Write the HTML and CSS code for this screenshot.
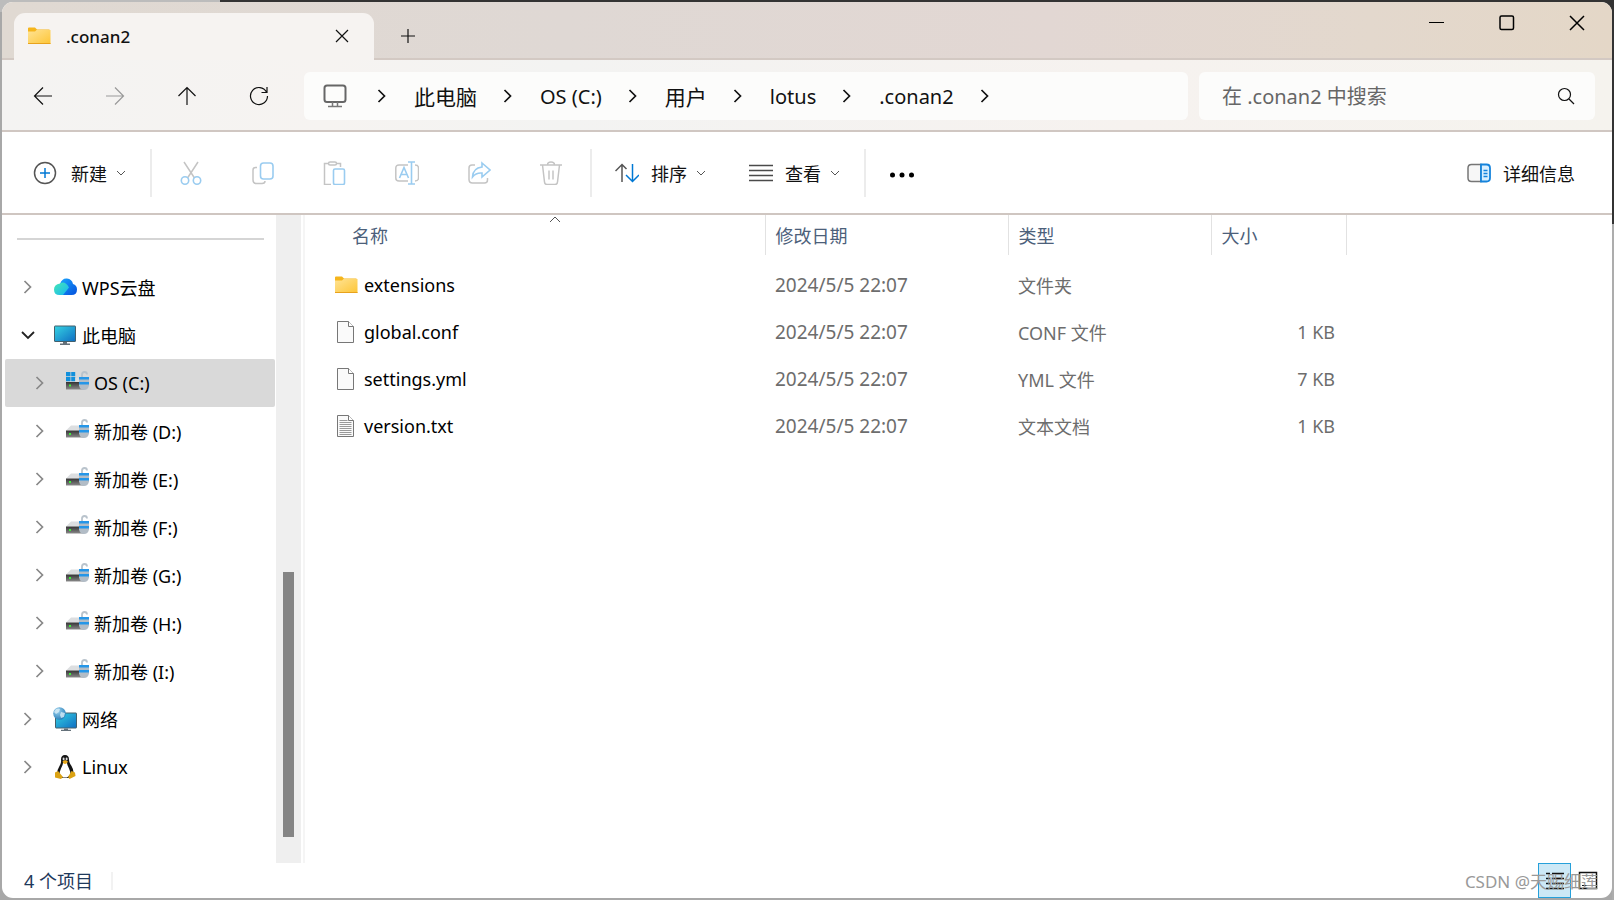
FILE: index.html
```html
<!DOCTYPE html>
<html lang="zh-CN">
<head>
<meta charset="utf-8">
<title>.conan2</title>
<link rel="stylesheet" href="styles.css">
</head>
<body>
<svg class="defs" aria-hidden="true">
  <defs>
    <linearGradient id="gFolder" x1="0" y1="0" x2="1" y2="1"><stop offset="0" stop-color="#ffe394"/><stop offset="1" stop-color="#fdc536"/></linearGradient>
    <linearGradient id="gScreen" x1="0" y1="0" x2="1" y2="1"><stop offset="0" stop-color="#35d3e3"/><stop offset="1" stop-color="#0f6dc2"/></linearGradient>
    <linearGradient id="gCloudL" x1="0" y1="0" x2="1" y2="1"><stop offset="0" stop-color="#45e8b4"/><stop offset="1" stop-color="#16b4f6"/></linearGradient>
    <linearGradient id="gCloudR" x1="0" y1="0" x2="1" y2="1"><stop offset="0" stop-color="#1aa5ff"/><stop offset="1" stop-color="#0550dc"/></linearGradient>
    <linearGradient id="gDrive" x1="0" y1="0" x2="0" y2="1"><stop offset="0" stop-color="#333"/><stop offset="1" stop-color="#8a8a8a"/></linearGradient>
    <radialGradient id="gGlobe" cx=".35" cy=".3" r=".8"><stop offset="0" stop-color="#9ed3ee"/><stop offset="1" stop-color="#1d77b5"/></radialGradient>
    <symbol id="folder" viewBox="0 0 24 24"><path d="M1 4.500q0-1 1-1h6l2 2h12.500v4H1z" fill="#f5b51c"/><path d="M1 7.500h7l1.500-1.500H23.500v14H1z" fill="url(#gFolder)"/><path d="M1 19.500h22.500" stroke="#e8a21c" stroke-width="1"/></symbol>
    <symbol id="right" viewBox="0 0 12 16"><path d="M2.500 2l6 6-6 6" fill="none" stroke="currentColor" stroke-width="1.700"/></symbol>
    <symbol id="down" viewBox="0 0 10 8"><path d="M1 2l4 4 4-4" fill="none" stroke="currentColor" stroke-width="1"/></symbol>
    <symbol id="file" viewBox="0 0 24 24"><path d="M3.500 1.500h11l5 5v16h-16z" fill="#fafafa" stroke="#777"/><path d="M14.500 1.500v5h5" fill="#fff" stroke="#777"/></symbol>
    <symbol id="lock" viewBox="0 0 24 24"><path d="M17 8V3.500q0-2.500 2.500-2.500T22 3.500" fill="none" stroke="#b9c3cc" stroke-width="1.800"/><path d="M14 6h10v8.500q-1 4.500-5 4.500t-5-4.500z" fill="#b2bcc6"/><path d="M14 6h10v2.500H14zM14 11h10v2.500H14z" fill="#2596e8"/></symbol>
    <symbol id="drive" viewBox="0 0 24 24"><path d="M1 11.500l5-5h9v5z" fill="#dcdee0"/><path d="M1 11.500h18v7H1z" fill="url(#gDrive)"/><path d="M4 14h2v2H4z" fill="#3ef03a"/><use href="#lock"/></symbol>
    <symbol id="osdrive" viewBox="0 0 24 24"><path d="M1 1h4.500v4.200H1zM6.200 1h4v4.200h-4zM1 6h4.500v4.200H1zM6.200 6h4v4.200h-4z" fill="#1290dc"/><path d="M10.500 7H15v4h-4.500z" fill="#dcdee0"/><path d="M1 11h18v7.500H1z" fill="url(#gDrive)"/><path d="M4 13.500h2v2H4z" fill="#3ef03a"/><use href="#lock"/></symbol>
  </defs>
</svg>

<div class="window">
  <header class="titlebar">
    <div class="tab">
      <svg class="i24"><use href="#folder"/></svg>
      <span class="tab-name">.conan2</span>
      <button class="tab-close" aria-label="关闭标签页"><svg class="i16" viewBox="0 0 16 16"><path d="M2 2l12 12M14 2L2 14" class="ln"/></svg></button>
    </div>
    <button class="tab-new" aria-label="新标签页"><svg class="i16" viewBox="0 0 16 16"><path d="M8 1v14M1 8h14" class="ln"/></svg></button>
    <div class="win-controls">
      <button aria-label="最小化"><svg class="i16" viewBox="0 0 16 16"><path d="M0 7.500h15" class="ln2 thin"/></svg></button>
      <button aria-label="最大化"><svg class="i16" viewBox="0 0 16 16"><rect x="1" y="1" width="13.500" height="13.500" rx="1.500" class="ln2"/></svg></button>
      <button aria-label="关闭"><svg class="i16" viewBox="0 0 16 16"><path d="M1 1l14 14M15 1L1 15" class="ln2"/></svg></button>
    </div>
  </header>

  <nav class="navbar">
    <div class="nav-buttons">
      <button aria-label="后退"><svg class="i20" viewBox="0 0 20 20"><path d="M19 10H1.500M10 1.500L1.500 10l8.500 8.500" class="ln"/></svg></button>
      <button aria-label="前进" class="off"><svg class="i20" viewBox="0 0 20 20"><path d="M1 10h17.500M10 1.500l8.500 8.500-8.500 8.500" class="ln"/></svg></button>
      <button aria-label="向上"><svg class="i20" viewBox="0 0 20 20"><path d="M10 19V1.500M1.500 10L10 1.500l8.500 8.500" class="ln"/></svg></button>
      <button aria-label="刷新"><svg class="i20" viewBox="0 0 20 20"><path d="M17.500 6A8.500 8.500 0 1 0 18.500 10M18 1v5.500h-5.500" class="ln"/></svg></button>
    </div>
    <div class="address">
      <svg class="i24 pc" viewBox="0 0 24 24"><rect x="1.500" y="1.500" width="21" height="16.500" rx="2.500" fill="none" stroke="#666" stroke-width="2"/><path d="M9.500 18v4M14.500 18v4M5 22.500h14" fill="none" stroke="#777" stroke-width="1.500"/></svg>
      <svg class="sep"><use href="#right"/></svg><button class="cjk">此电脑</button>
      <svg class="sep"><use href="#right"/></svg><button>OS (C:)</button>
      <svg class="sep"><use href="#right"/></svg><button class="cjk">用户</button>
      <svg class="sep"><use href="#right"/></svg><button>lotus</button>
      <svg class="sep"><use href="#right"/></svg><button>.conan2</button>
      <svg class="sep"><use href="#right"/></svg>
    </div>
    <div class="search">
      <input type="text" aria-label="搜索" placeholder="在 .conan2 中搜索">
      <svg class="i18" viewBox="0 0 18 18"><circle cx="7.500" cy="7.500" r="6" class="ln"/><path d="M12 12l5 5" class="ln"/></svg>
    </div>
  </nav>

  <div class="toolbar">
    <button class="tool new"><svg class="i24" viewBox="0 0 24 24"><circle cx="12" cy="12" r="10.500" fill="none" stroke="#555" stroke-width="1.500"/><path d="M12 7v10M7 12h10" stroke="#0078d4" stroke-width="1.500"/></svg><span>新建</span><svg class="drop"><use href="#down"/></svg></button>
    <span class="rule"></span>
    <div class="actions">
      <button aria-label="剪切"><svg class="i24" viewBox="0 0 24 24"><path d="M5 1l10.500 16M19 1L8.500 17" class="g"/><circle cx="6" cy="19.500" r="3.700" class="b"/><circle cx="18" cy="19.500" r="3.700" class="b"/></svg></button>
      <button aria-label="复制"><svg class="i24" viewBox="0 0 24 24"><path d="M6 6.500H4.500Q2 6.500 2 9v10q0 3.500 3.500 3.500H11q3 0 3-2.500" class="g"/><rect x="9.500" y="2" width="12.500" height="16" rx="3" class="b"/></svg></button>
      <button aria-label="粘贴"><svg class="i24" viewBox="0 0 24 24"><path d="M6 2.500H1.500v21H8M13 2.500h4.500V6" class="g"/><rect x="5.500" y="1" width="8" height="3" rx="1.500" class="g"/><rect x="10.500" y="8" width="11" height="15.500" rx="1.500" class="b"/></svg></button>
      <button aria-label="重命名"><svg class="i24" viewBox="0 0 24 24"><path d="M13 4H4Q.8 4 .8 7v10q0 3 3.200 3H13M20 4q3.500 0 3.500 3v10q0 3-3.500 3" class="g"/><path d="M4.500 17L9 6.500 13.500 17M6 13.500h6M16.500 1v22M13 1h7M13 23h7" class="b"/></svg></button>
      <button aria-label="共享"><svg class="i24" viewBox="0 0 24 24"><path d="M8 4H5Q2 4 2 7v11.500q0 3.500 3.500 3.500h12q3 0 3-3V17" class="g"/><path d="M15 2l8 7-8 7v-4q-6-.5-9.500 4Q6 7 15 6z" class="b"/></svg></button>
      <button aria-label="删除"><svg class="i24" viewBox="0 0 24 24"><path d="M1 4h22M8.500 4q0-3 3.500-3t3.500 3M3.500 4l2 17q.2 2.500 2.500 2.500h8q2.300 0 2.500-2.500l2-17M10 9.500v9M14 9.500v9" class="g"/></svg></button>
    </div>
    <span class="rule"></span>
    <button class="tool sort"><svg class="i24" viewBox="0 0 24 24"><path d="M7 21V3.500M.500 10L7 3.500l4.500 4.500" fill="none" stroke="#555" stroke-width="1.500"/><path d="M17.500 3v17.500M11 14l6.500 6.500L24 14" fill="none" stroke="#0078d4" stroke-width="1.500"/></svg><span>排序</span><svg class="drop"><use href="#down"/></svg></button>
    <button class="tool view"><svg class="i24" viewBox="0 0 24 24"><path d="M0 4.500h24M0 9.500h24M0 14.500h24M0 19.500h24" stroke="#4a4a4a" stroke-width="1.500"/></svg><span>查看</span><svg class="drop"><use href="#down"/></svg></button>
    <span class="rule"></span>
    <button class="tool more" aria-label="更多"><svg class="i24" viewBox="0 0 24 24"><circle cx="2.500" cy="14" r="2.500"/><circle cx="12" cy="14" r="2.500"/><circle cx="21.500" cy="14" r="2.500"/></svg></button>
    <button class="tool details"><svg class="i24" viewBox="0 0 24 24"><path d="M14 3.500H4.500Q1 3.500 1 7v10q0 3.500 3.500 3.500H14z" fill="#f7f7f7" stroke="#767676" stroke-width="1.500"/><path d="M14 3.500h5.500Q23 3.500 23 7v10q0 3.500-3.500 3.500H14z" fill="#d9efff" stroke="#1583dc" stroke-width="1.800"/><path d="M16.500 9.500h4M16.500 12.500h4M16.500 15.500h4" stroke="#1583dc" stroke-width="1.500"/></svg><span>详细信息</span></button>
  </div>

  <main class="content">
    <aside class="sidebar">
      <hr>
      <ul class="tree">
        <li><button><svg class="arrow"><use href="#right"/></svg><svg class="i24" viewBox="0 0 24 24"><path d="M7 9Q9 3 14 3.500 19 4 20 9q4 1 4 5.500 0 5.500-5.500 5.500H10z" fill="url(#gCloudR)"/><path d="M7 8.500q5-3 9 4L10 20H6.500Q1 20 1 14.500 1 9.500 7 8.500z" fill="url(#gCloudL)"/></svg><span>WPS云盘</span></button></li>
        <li><button><svg class="arrow open" viewBox="0 0 16 12"><path d="M2 3l6 6 6-6" fill="none" stroke="#222" stroke-width="1.800"/></svg><svg class="i24" viewBox="0 0 24 24"><rect x="1.500" y="3" width="21" height="15.500" rx=".500" fill="url(#gScreen)" stroke="#44606c"/><path d="M10 19h4v2h-4zM7 20.500h10v1.500H7z" fill="#65717a"/></svg><span>此电脑</span></button></li>
        <li class="child"><button class="selected"><svg class="arrow"><use href="#right"/></svg><svg class="i24"><use href="#osdrive"/></svg><span>OS (C:)</span></button></li>
        <li class="child"><button><svg class="arrow"><use href="#right"/></svg><svg class="i24"><use href="#drive"/></svg><span>新加卷 (D:)</span></button></li>
        <li class="child"><button><svg class="arrow"><use href="#right"/></svg><svg class="i24"><use href="#drive"/></svg><span>新加卷 (E:)</span></button></li>
        <li class="child"><button><svg class="arrow"><use href="#right"/></svg><svg class="i24"><use href="#drive"/></svg><span>新加卷 (F:)</span></button></li>
        <li class="child"><button><svg class="arrow"><use href="#right"/></svg><svg class="i24"><use href="#drive"/></svg><span>新加卷 (G:)</span></button></li>
        <li class="child"><button><svg class="arrow"><use href="#right"/></svg><svg class="i24"><use href="#drive"/></svg><span>新加卷 (H:)</span></button></li>
        <li class="child"><button><svg class="arrow"><use href="#right"/></svg><svg class="i24"><use href="#drive"/></svg><span>新加卷 (I:)</span></button></li>
        <li><button><svg class="arrow"><use href="#right"/></svg><svg class="i24" viewBox="0 0 24 24"><rect x="2.500" y="6" width="21" height="15" rx=".500" fill="url(#gScreen)" stroke="#44606c"/><path d="M11 21.500h4V23h-4zM8 22.800h10V24H8z" fill="#65717a"/><circle cx="6.500" cy="6.500" r="6.300" fill="url(#gGlobe)"/><path d="M3 2q3-1 4 0L6 5 3 7 1 5zM8 5l4 1-1 4-3 1-1-3z" fill="#d9eef8" opacity=".8"/></svg><span>网络</span></button></li>
        <li><button><svg class="arrow"><use href="#right"/></svg><svg class="i24" viewBox="0 0 24 24"><path d="M12 0q4 0 4 4.500 0 3 2.500 6.500 2.500 4 2 8L16 23H8l-4-4q0-4 2.500-8Q8.500 8 8 4.500 8 0 12 0z" fill="#151515"/><path d="M10 8h4q0 2 2 5.500t1 6.500l-3 2.500h-4L7 20q-1-3 1-6.500T10 8z" fill="#fff"/><ellipse cx="10.600" cy="4" rx="1" ry="1.400" fill="#ddd"/><ellipse cx="13.600" cy="4" rx="1" ry="1.400" fill="#ddd"/><path d="M9.500 6.500L12 5l3 1.500Q14 9 12 9T9.500 6.500z" fill="#e9a91a"/><path d="M2 17.500l3-1.500 5 6-2 2-6-1.500zM22 17.500L18.500 16 15 22l1.500 2 6-3z" fill="#dba213"/></svg><span>Linux</span></button></li>
      </ul>
    </aside>
    <div class="scrollbar"><div class="thumb"></div></div>
    <section class="files">
      <table>
        <colgroup><col class="c-name"><col class="c-date"><col class="c-type"><col class="c-size"><col></colgroup>
        <thead><tr>
          <th class="name-head">名称<svg class="sorted" viewBox="0 0 12 8"><path d="M1 7l5-5 5 5" fill="none" stroke="#555"/></svg></th>
          <th>修改日期</th><th>类型</th><th>大小</th><td></td>
        </tr></thead>
        <tbody>
          <tr><td class="name"><div><svg class="i24"><use href="#folder"/></svg><span>extensions</span></div></td><td class="date">2024/5/5 22:07</td><td>文件夹</td><td></td><td></td></tr>
          <tr><td class="name"><div><svg class="i24"><use href="#file"/></svg><span>global.conf</span></div></td><td class="date">2024/5/5 22:07</td><td>CONF 文件</td><td class="size">1 KB</td><td></td></tr>
          <tr><td class="name"><div><svg class="i24"><use href="#file"/></svg><span>settings.yml</span></div></td><td class="date">2024/5/5 22:07</td><td>YML 文件</td><td class="size">7 KB</td><td></td></tr>
          <tr><td class="name"><div><svg class="i24" viewBox="0 0 24 24"><use href="#file"/><path d="M5.500 6.500h8M5.500 8.500h12M5.500 10.500h12M5.500 12.500h12M5.500 14.500h12M5.500 16.500h12M5.500 18.500h12M5.500 20.500h12" stroke="#999"/></svg><span>version.txt</span></div></td><td class="date">2024/5/5 22:07</td><td>文本文档</td><td class="size">1 KB</td><td></td></tr>
        </tbody>
      </table>
    </section>
  </main>

  <footer class="status">
    <span class="count">4 个项目</span>
    <div class="modes">
      <button class="mode on" aria-label="详细信息视图"><svg class="i20" viewBox="0 0 20 20"><path d="M1 2.500h4M7 2.500h12M1 7.500h4M7 7.500h12M1 12.500h4M7 12.500h12M1 17.500h18" stroke="#111" stroke-width="1.500"/></svg></button>
      <button class="mode" aria-label="大图标视图"><svg class="i20" viewBox="0 0 20 20"><rect x="1.500" y="1.500" width="17" height="16" fill="none" stroke="#111" stroke-width="1.500"/><path d="M4 14.500h12" stroke="#111"/></svg></button>
    </div>
    <span class="watermark">CSDN @天赐细莲</span>
  </footer>
</div>
</body>
</html>
```
FILE: styles.css
```css
* { box-sizing: border-box; }

body {
  margin: 0;
  height: 100vh;
  padding: 2px;
  overflow: hidden;
  background:
    linear-gradient(#333 0 224px, #adadad 224px) right / 2px 100% no-repeat,
    linear-gradient(90deg, #bcbcbc 0 220px, #333 220px) top / 100% 12px no-repeat,
    #a8a8a8;
  font-family: "Noto Sans", "Noto Sans CJK SC", sans-serif;
  font-size: 17px;
  color: #111;
}

button {
  display: inline-flex;
  align-items: center;
  justify-content: center;
  border: 0;
  padding: 0;
  background: none;
  font: inherit;
  color: inherit;
  white-space: nowrap;
}

svg { flex: none; display: block; }
.defs { position: absolute; width: 0; height: 0; }
.i16 { width: 16px; height: 16px; }
.i18 { width: 18px; height: 18px; }
.i20 { width: 20px; height: 20px; }
.i24 { width: 24px; height: 24px; }
.ln { fill: none; stroke: currentColor; stroke-width: 1.2; }
.ln2 { fill: none; stroke: #000; stroke-width: 1.5; }
.thin { stroke-width: 1; }
.g { fill: none; stroke: #c4c4c4; stroke-width: 1.5; }
.b { fill: none; stroke: #9accf0; stroke-width: 1.6; }

.window {
  height: 100%;
  display: grid;
  grid-template-rows: 58px 72px 83px 1fr 35px;
  overflow: hidden;
  border-radius: 11px;
  background: #fff;
}

.titlebar {
  display: flex;
  align-items: flex-end;
  padding-left: 12px;
  background: linear-gradient(90deg, #e0d9d2, #dfd8d4 35%, #e2d7d3 65%, #e3d8cd 85%, #e4d7c7);
  border-bottom: 2px solid #d3c9c3;
}
.tab {
  display: flex;
  align-items: center;
  width: 360px;
  height: 47px;
  margin-bottom: -2px;
  padding: 0 20px 1px 13px;
  border-radius: 11px 11px 0 0;
  background: #f6f3f1;
}
.tab-name { flex: 1; margin-left: 15px; font-weight: 500; }
.tab-close { width: 24px; height: 24px; }
.tab-new { width: 40px; height: 40px; margin: 0 0 2px 14px; }
.win-controls { display: flex; align-self: flex-start; margin-left: auto; }
.win-controls button { width: 70px; height: 41px; }

.navbar {
  display: flex;
  align-items: center;
  gap: 11px;
  padding: 2px 17px 0 5px;
  background: linear-gradient(90deg, #f4f3f2, #f6f3f1 20%, #f3f3f2 35%, #f6f2ef 70%, #f5f3ee);
  border-bottom: 2px solid #d0c7c2;
}
.nav-buttons { display: flex; }
.nav-buttons button { width: 72px; height: 48px; }
.off { color: #999; }
.address, .search {
  display: flex;
  align-items: center;
  height: 48px;
  border-radius: 6px;
  background: #fcfcfb;
  font-size: 20px;
}
.address { flex: 1; padding-left: 19px; margin-left: -2px; }
.pc { margin-right: 13px; }
.sep { width: 12px; height: 16px; margin: 0 16px; }
.address .sep:not(:last-child) { margin-right: 26px; }
.address button { margin-right: 9px; }
.address .cjk { font-size: 21px; }
.search { width: 396px; padding: 0 20px 0 23px; }
.search input {
  flex: 1;
  min-width: 0;
  border: 0;
  padding: 0;
  outline: 0;
  background: none;
  font: inherit;
}
.search input::placeholder { color: #666; opacity: 1; }

.toolbar {
  display: flex;
  align-items: center;
  padding: 0 37px 0 31px;
  border-bottom: 2px solid #cfc6c1;
  font-size: 18px;
}
.tool { height: 48px; }
.tool span { margin-left: 12px; }
.new span { margin-left: 14px; }
.drop { width: 10px; height: 8px; margin-left: 9px; color: #555; }
.rule { width: 2px; height: 48px; background: #ececec; }
.new { margin-right: 24px; }
.actions { display: flex; padding: 0 3px; }
.actions button { width: 72px; height: 48px; }
.sort { margin: 0 43px 0 23px; }
.view { margin-right: 24px; }
.more { margin-left: 24px; }
.details { margin-left: auto; }

.content { display: flex; min-height: 0; }
.sidebar { width: 274px; overflow: hidden; }
.sidebar hr {
  height: 2px;
  margin: 23px 12px 23px 15px;
  border: 0;
  background: #d5d5d5;
}
.tree { margin: 0; padding: 0 1px 0 3px; list-style: none; }
.tree button {
  width: 100%;
  height: 48px;
  justify-content: flex-start;
  padding-left: 17px;
  border-radius: 2px;
  font-size: 18px;
  color: #000;
}
.tree .child button { padding-left: 29px; }
.tree .selected { background: #d9d9d9; }
.tree span { margin-left: 5px; }
.arrow { width: 12px; height: 16px; margin-right: 19px; color: #888; }
.arrow.open { width: 16px; height: 12px; margin: 0 17px 0 -2px; }
.scrollbar {
  width: 25px;
  padding: 357px 7px 26px;
  background: #efefef;
}
.thumb { height: 100%; background: #858585; }
.files { flex: 1; margin-left: 2px; border-left: 2px solid #f5f5f5; }

table { width: 100%; table-layout: fixed; border-collapse: collapse; }
.c-name { width: 460px; }
.c-date { width: 243px; }
.c-type { width: 203px; }
.c-size { width: 135px; }
th, td { padding: 0 9px 0 10px; text-align: left; white-space: nowrap; }
th {
  height: 40px;
  border-right: 1px solid #e2e2e2;
  font-size: 18px;
  font-weight: 400;
  color: #4c607a;
}
.name-head { position: relative; padding-left: 47px; }
.sorted { position: absolute; top: 0; left: 244px; width: 12px; height: 8px; }
tbody td { height: 47px; color: #6d6d6d; font-size: 18px; }
tbody td.date { font-size: 19px; }
tbody::before { content: ""; display: block; height: 6px; }
td.name { padding-left: 29px; color: #000; }
td.name div { display: flex; align-items: center; gap: 6px; }
td.size { padding-right: 11px; text-align: right; }

.status {
  position: relative;
  display: flex;
  align-items: center;
  padding: 0 8px 0 22px;
}
.count { padding-right: 18px; border-right: 2px solid #f2f2f2; line-height: 18px; color: #1e395b; font-size: 18px; }
.modes { display: flex; margin-left: auto; }
.mode { width: 33px; height: 35px; border: 1px solid transparent; }
.mode.on { border-color: #26a0da; background: #cce8f6; }
.watermark {
  position: absolute;
  right: 14px;
  bottom: 5px;
  font-size: 17px;
  color: #999;
  pointer-events: none;
}
```
